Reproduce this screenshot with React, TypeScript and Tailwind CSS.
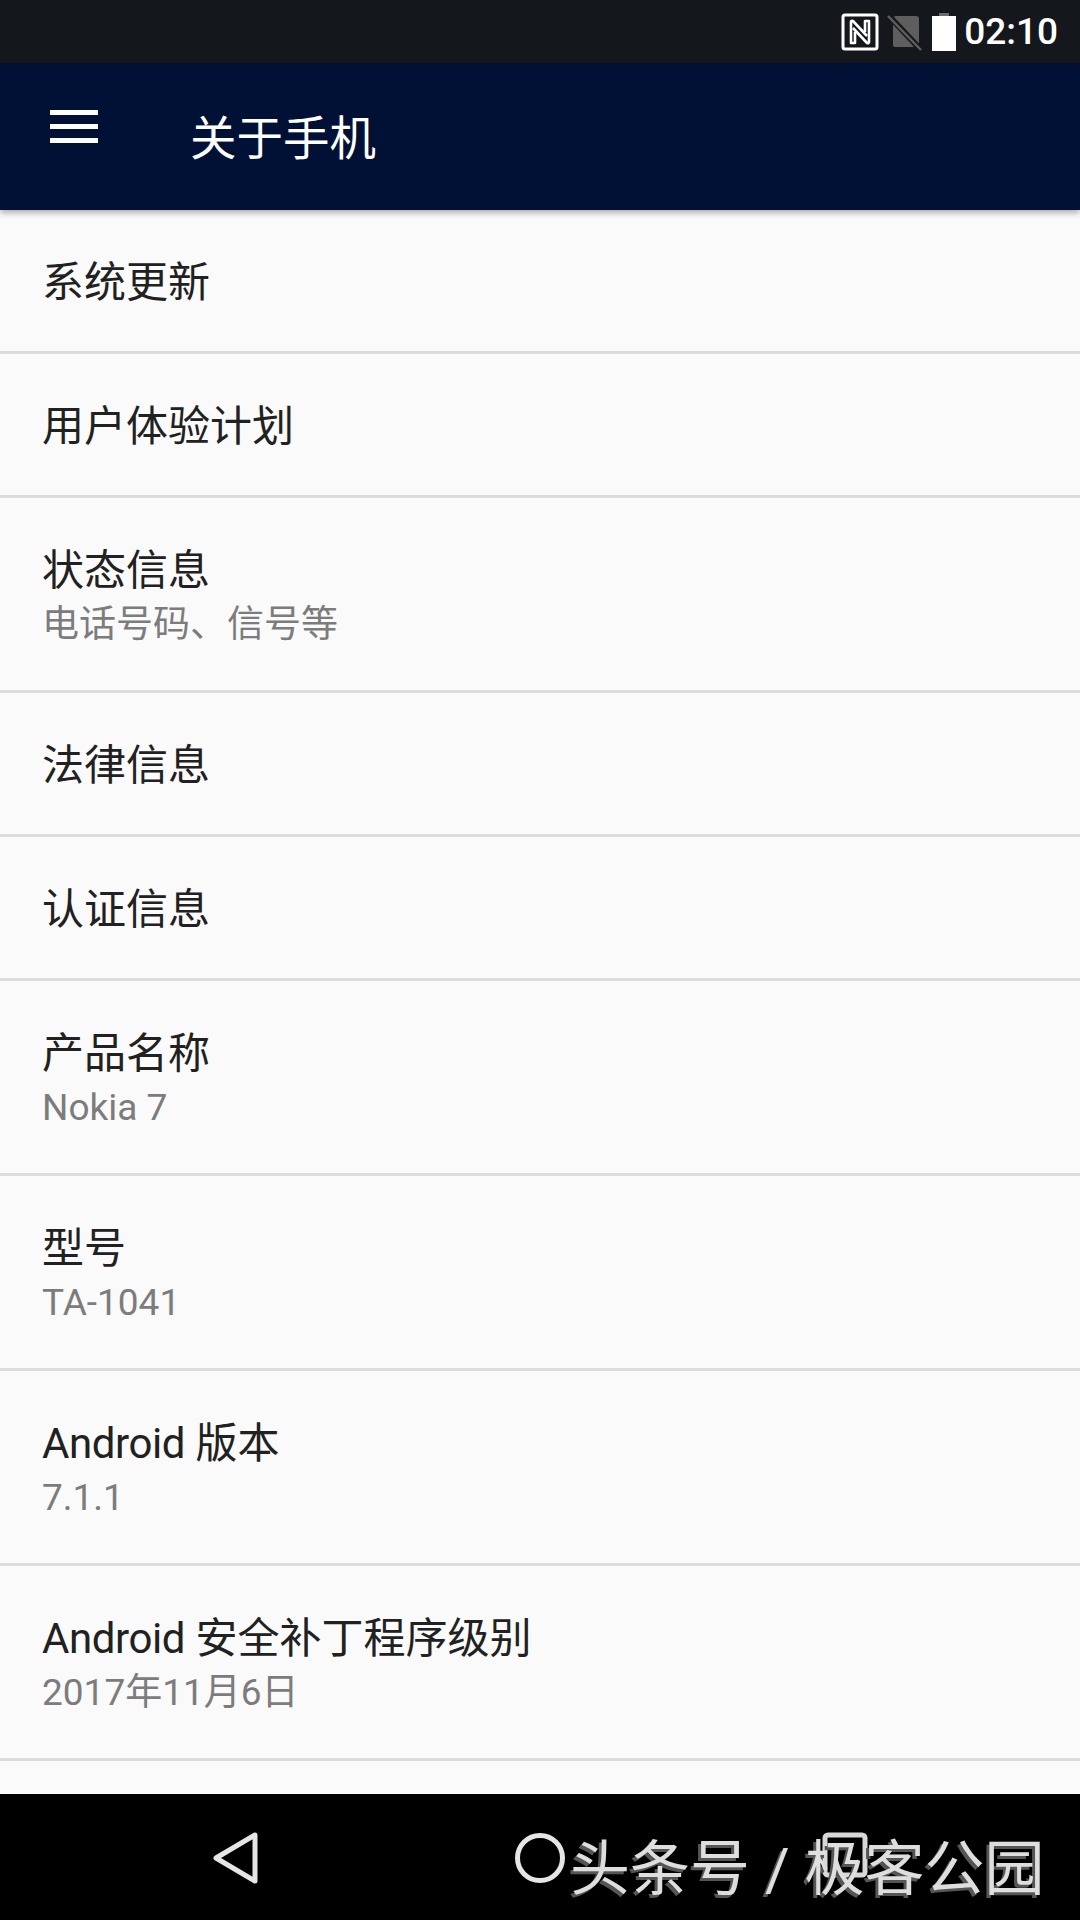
const rows: { t: string; s?: string; latin?: string }[] = [
  { t: '系统更新' },
  { t: '用户体验计划' },
  { t: '状态信息', s: '电话号码、信号等' },
  { t: '法律信息' },
  { t: '认证信息' },
  { t: '产品名称', s: 'Nokia 7' },
  { t: '型号', s: 'TA-1041' },
  { latin: 'Android', t: ' 版本', s: '7.1.1' },
  { latin: 'Android', t: ' 安全补丁程序级别', s: '2017年11月6日' },
];

function Row({ t, s, latin }: { t: string; s?: string; latin?: string }) {
  return (
    <div className={`${s ? 'h-[195px] pt-[6px]' : 'h-[144px] pt-[4px]'} shrink-0 flex flex-col justify-center pl-[42px] border-b-[3px] border-[#dcdcdc]`}>
      <div className="text-[42px] leading-[52px] text-[#212121] whitespace-pre">
        {latin && <span className="tracking-[-0.4px]">{latin}</span>}
        {t}
      </div>
      {s && <div className="mt-[3px] text-[37px] leading-[50px] text-[#7c7c7c]">{s}</div>}
    </div>
  );
}

export default function App() {
  return (
    <div className="relative w-[1080px] h-[1920px] flex flex-col overflow-hidden bg-[#fafafa] font-['Roboto','Noto_Sans_CJK_SC',sans-serif]">
      <div className="h-[63px] shrink-0 bg-[#14181c] flex items-center justify-end pr-[22px]">
        <svg width="38" height="38" viewBox="0 0 38 38" fill="none" stroke="#fff">
          <rect x="2" y="2" width="34" height="34" rx="2" strokeWidth="3" />
          <g transform="translate(1,1)" strokeWidth="2.600" strokeLinejoin="round">
            <path d="M13 18V29H9V8Q9 6.500 11 7L25 22" />
            <path d="M23 18V7H27V28Q27 29.500 25 29L11 14" />
          </g>
        </svg>
        <svg className="ml-[8px]" width="36" height="38" viewBox="0 0 36 38">
          <path d="M6 6c0-2 1-3 3-3h20c2 0 3 1 3 3v26c0 1-1 2-2 2H8c-1 0-2-1-2-2z" fill="#5e5e5e" />
          <path d="M2 3l32 34" stroke="#14181c" strokeWidth="6" />
          <path d="M1 3l33 34" stroke="#5e5e5e" strokeWidth="2.500" />
        </svg>
        <svg className="ml-[9px]" width="24" height="38" viewBox="0 0 24 38">
          <path d="M7 0h10v3H7z" fill="#6a6a6a" />
          <rect x="0" y="3" width="24" height="35" fill="#fff" />
        </svg>
        <span className="ml-[8px] text-[37px] leading-none font-medium text-white">02:10</span>
      </div>

      <div className="relative z-10 h-[147px] shrink-0 bg-[#001135] shadow-[0_3px_6px_rgba(0,0,0,0.3)] flex items-start">
        <div className="w-[48px] ml-[50px] mt-[47px] flex flex-col gap-[9px]">
          <div className="h-[5px] bg-white" />
          <div className="h-[5px] bg-white" />
          <div className="h-[5px] bg-white" />
        </div>
        <div className="ml-[92px] mt-[44px] text-[46.500px] leading-[64px] text-white">关于手机</div>
      </div>

      <div className="flex-1 flex flex-col overflow-hidden">
        {rows.map((r) => (
          <Row key={r.t} t={r.t} s={r.s} latin={r.latin} />
        ))}
      </div>

      <div className="relative h-[126px] shrink-0 bg-black">
        <svg className="absolute left-[212px] top-[38px]" width="48" height="52" viewBox="0 0 48 52" fill="none" stroke="#e6e6e6" strokeWidth="5" strokeLinejoin="round">
          <path d="M43 3v46L4 26z" />
        </svg>
        <svg className="absolute left-[514px] top-[38px]" width="52" height="52" viewBox="0 0 52 52" fill="none" stroke="#e6e6e6" strokeWidth="5">
          <ellipse cx="26" cy="26" rx="22.500" ry="22.500" />
        </svg>
        <svg className="absolute left-[822px] top-[38px]" width="46" height="46" viewBox="0 0 46 46" fill="none" stroke="#d8d8d8" strokeWidth="5">
          <rect x="3" y="3" width="40" height="40" rx="3" />
        </svg>
        <div className="absolute left-[570px] top-[40px] text-[60px] leading-[72px] whitespace-nowrap text-[#dedede] [text-shadow:-3px_3px_0_#555]">头条号 / 极客公园</div>
      </div>
    </div>
  );
}
